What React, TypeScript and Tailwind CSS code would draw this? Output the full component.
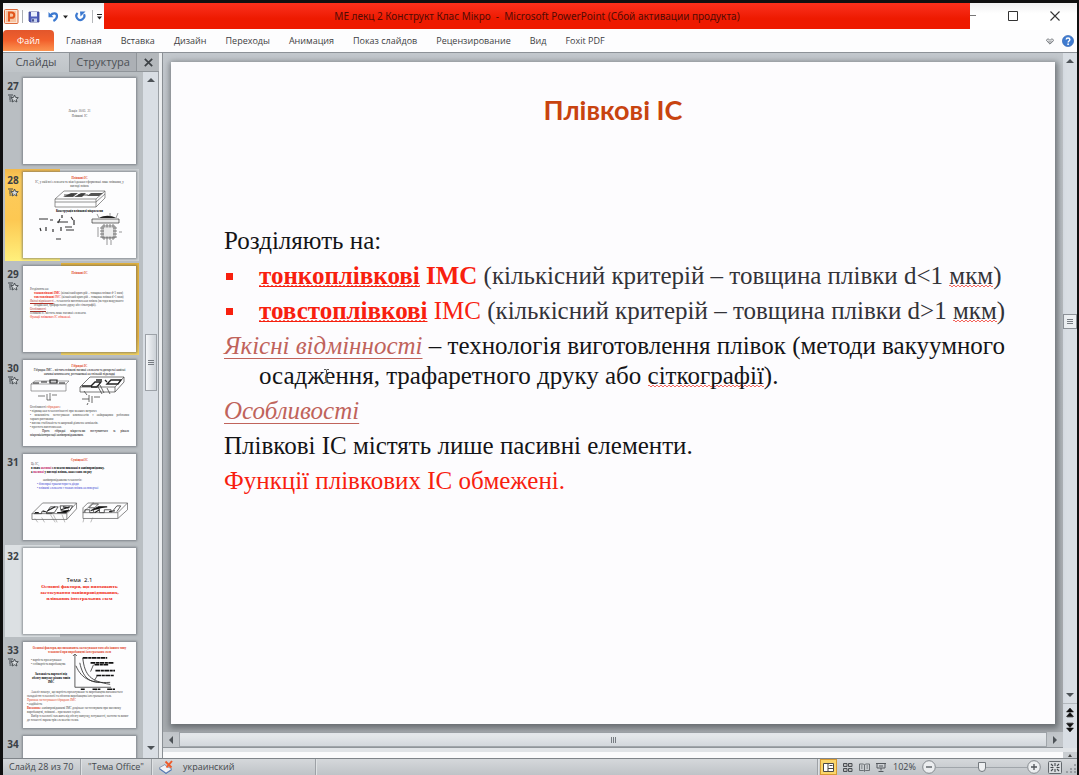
import type { ReactNode } from "react";

const ui = "font-['Open_Sans','Noto_Sans',sans-serif]";
const serif = "font-['Liberation_Serif','Times_New_Roman',serif]";

const tabs = [
  "Главная",
  "Вставка",
  "Дизайн",
  "Переходы",
  "Анимация",
  "Показ слайдов",
  "Рецензирование",
  "Вид",
  "Foxit PDF",
];

function Logo() {
  return (
    <svg width="15" height="15" viewBox="0 0 15 15" aria-hidden="true">
      <rect x="0.5" y="0.5" width="13.5" height="14" rx="1" fill="#fbe3d3" stroke="#dd6a3a" />
      <rect x="2" y="2" width="10" height="11" fill="#f7c3a0" />
      <path d="M5 12.5V3.5h2.6a2.6 2.6 0 0 1 0 5.3H5" fill="none" stroke="#e2541b" strokeWidth="2" />
    </svg>
  );
}

function SaveIcon() {
  return (
    <svg width="12" height="12" viewBox="0 0 12 12" aria-hidden="true">
      <path d="M1 1h10v10H2L1 10z" fill="#4d5bb8" stroke="#3d4490" strokeWidth="0.8" />
      <rect x="3" y="1" width="6" height="4.5" fill="#e9eefb" />
      <rect x="3.5" y="7.5" width="5.5" height="3.5" fill="#c4d0ee" />
      <rect x="4.2" y="8.2" width="1.6" height="2.4" fill="#2c3478" />
    </svg>
  );
}

function UndoIcon() {
  return (
    <svg width="11" height="11" viewBox="0 0 11 11" aria-hidden="true">
      <path d="M0.5 1v5.2h5z" fill="#3c79d0" />
      <path d="M2.5 4.4C4.5 1.6 9 1.6 9 5c0 2.2-1.400 3.800-3.600 5" fill="none" stroke="#3c79d0" strokeWidth="2.200" />
    </svg>
  );
}

function RedoIcon() {
  return (
    <svg width="11" height="11" viewBox="0 0 11 11" aria-hidden="true">
      <path d="M2.600 2A4 4 0 1 0 9 3.200" fill="none" stroke="#3c79d0" strokeWidth="2.200" />
      <path d="M5 0.500h5.500L5.500 5.500z" fill="#3c79d0" />
    </svg>
  );
}

function Arrow({ dir, className = "" }: { dir: "up" | "down" | "left" | "right"; className?: string }) {
  const paths = {
    up: "M0 6 4 2l4 4z",
    down: "M0 2h8L4 6z",
    left: "M6 0v8L2 4z",
    right: "M2 0l4 4-4 4z",
  };
  return (
    <svg width="8" height="8" viewBox="0 0 8 8" className={`shrink-0 ${className}`} aria-hidden="true">
      <path d={paths[dir]} fill="#4d5257" />
    </svg>
  );
}

function StarIcon() {
  return (
    <svg width="11" height="9" viewBox="0 0 11 9" aria-hidden="true">
      <path d="M0 1h5M1 3h3M1 5h2.500M1.500 7h2" stroke="#42474c" strokeWidth="1.100" />
      <path
        d="M6.500 1 7.600 3.400 10.300 3.700 8.300 5.400 8.900 8 6.500 6.700 4.200 8 4.800 5.400 2.900 3.700 5.500 3.400z"
        fill="#d5d9dc"
        stroke="#42474c"
        strokeWidth="0.9"
      />
    </svg>
  );
}

function QuickAccess() {
  return (
    <div className="flex w-[101px] shrink-0 items-center pl-px">
      <Logo />
      <span className="ml-[3px] h-[13px] w-px bg-[#aaaeb2]" />
      <button aria-label="Сохранить" className="ml-[5px]"><SaveIcon /></button>
      <button aria-label="Отменить" className="ml-2"><UndoIcon /></button>
      <button aria-label="Список отмены" className="ml-1">
        <svg width="5" height="4" viewBox="0 0 5 4"><path d="M0 0.500h5L2.500 3.500z" fill="#222" /></svg>
      </button>
      <button aria-label="Повторить" className="ml-[7px]"><RedoIcon /></button>
      <span className="ml-1.5 h-[13px] w-px bg-[#b5b8bb]" />
      <button aria-label="Настройка панели" className="ml-1">
        <svg width="5" height="6" viewBox="0 0 5 6"><path d="M0 0.500h5" stroke="#222" /><path d="M0 2.500h5L2.500 5.500z" fill="#222" /></svg>
      </button>
    </div>
  );
}

function TitleBar() {
  return (
    <header className="flex h-[27px] shrink-0 bg-gradient-to-b from-[#f1f1f2] to-white to-40%">
      <QuickAccess />
      <h1 className="flex h-[26px] min-w-0 flex-1 items-center justify-center bg-gradient-to-b from-[#fb301b] to-[#ee1a00] to-60% font-['Noto_Sans',sans-serif] text-[10px] whitespace-nowrap text-[#520b04]">
        МЕ лекц 2 Конструкт Клас Мікро&nbsp; -&nbsp; Microsoft PowerPoint (Сбой активации продукта)
      </h1>
      <div className="flex w-[107px] shrink-0 items-center pb-0.5">
        <button aria-label="Свернуть"><svg width="6" height="9" viewBox="0 0 6 9"><path d="M0 4.500h6" stroke="#777" /></svg></button>
        <button aria-label="Развернуть" className="ml-8"><svg width="10" height="10" viewBox="0 0 10 10"><path d="M0.500 0.500h9v9h-9z" fill="none" stroke="#333" /></svg></button>
        <button aria-label="Закрыть" className="ml-8"><svg width="10" height="10" viewBox="0 0 10 10"><path d="m0.500 0.500 9 9M9.500 0.500l-9 9" stroke="#333" strokeWidth="1.100" /></svg></button>
      </div>
    </header>
  );
}

function Ribbon() {
  return (
    <nav className="flex h-[23px] shrink-0 items-center border-b border-[#8d9298] bg-[#fdfdfe] text-[9px] text-[#3e3e42]">
      <button className="h-[21px] w-[51px] self-start rounded-t-sm bg-gradient-to-b from-[#e2562c] via-[#f2602c] to-[#fb9350] text-white">Файл</button>
      <div className="flex flex-1 gap-[19px] pl-3">
        {tabs.map((t) => (
          <button key={t} className="whitespace-nowrap">{t}</button>
        ))}
      </div>
      <button aria-label="Свернуть ленту" className="mr-2">
        <svg width="8" height="7" viewBox="0 0 7 6"><path d="M3.500 5.300 0.600 2.400C0.300 0.500 2.500 0.300 3.500 2 4.500 0.300 6.700 0.500 6.400 2.400zM2 2.500 3.500 3.800 5 2.500" fill="none" stroke="#65696e" strokeWidth="0.800" /></svg>
      </button>
      <button aria-label="Справка" className="mr-[3px]">
        <svg width="12" height="12" viewBox="0 0 12 12">
          <circle cx="6" cy="6" r="5.600" fill="#3f7bd0" stroke="#2d5fae" strokeWidth="0.600" />
          <path d="M4.200 4.600C4.200 2.500 7.900 2.500 7.900 4.600 7.900 6 6.100 5.900 6.100 7.400" fill="none" stroke="#fff" strokeWidth="1.400" />
          <circle cx="6.100" cy="9.200" r="0.900" fill="#fff" />
        </svg>
      </button>
    </nav>
  );
}

function Chip({ className = "" }: { className?: string }) {
  return (
    <svg viewBox="0 0 52 18" className={className} aria-hidden="true">
      <path d="M1 9h41v8H1zM1 9 10 1h41l-9 8M51 1v7l-9 9M1 12h41l9-8" fill="none" stroke="#666" strokeWidth="0.700" />
      <path d="m9 7 8-4h7l-5 4zM20 7l7-4h5l-4 4zM33 6l4-3h12l-4 3z" fill="#555" />
      <path d="M10 5h10M24 5h10" stroke="#222" strokeWidth="0.800" />
    </svg>
  );
}

function ChipB({ className = "" }: { className?: string }) {
  return (
    <svg viewBox="0 0 48 22" className={className} aria-hidden="true">
      <path d="M1 12h36v6H1zM1 12 12 1h35L37 12M47 1v6L37 18" fill="none" stroke="#555" strokeWidth="0.700" />
      <path d="M3 12h8v-2h5v2h6M20 5h8l-4 6h-8zM30 4h13l-3 5h-9z" fill="none" stroke="#444" strokeWidth="0.900" />
      <path d="m17 9 8-4M27 11h9l3-3M31 8l9-3M4 11h4M12 9l3 1M33 5l6 1" stroke="#222" strokeWidth="1.200" />
      <path d="m4 17 3 4M11 16l3 5M20 13l5 8M23 13l4 8M32 13l3 8" stroke="#777" strokeWidth="0.500" />
    </svg>
  );
}

function ChipC({ className = "" }: { className?: string }) {
  return (
    <svg viewBox="0 0 48 22" className={className} aria-hidden="true">
      <path d="M1 11h36v6H1zM1 11 11 1h36L37 11M47 1v7L37 17M1 11V6l5-5h6" fill="none" stroke="#555" strokeWidth="0.700" />
      <path d="M3 11V8h5v3h4V7h6v4h5V8h7v3M7 6l4-4h6l-4 4zM32 9l4-5h4l-4 6" fill="none" stroke="#444" strokeWidth="0.900" />
      <path d="M9 9l8-4h9M13 11l5-3M28 10l6-1" stroke="#222" strokeWidth="1.200" />
      <path d="m2 17-1 4M11 16l-2 5" stroke="#777" strokeWidth="0.500" />
    </svg>
  );
}

function Thumb27() {
  return (
    <div className="flex flex-col items-center pt-[31px] text-[3px] leading-[5px]">
      <p>Лекція&nbsp; 10.03.&nbsp; 21</p>
      <p>Плівкові&nbsp; ІС</p>
    </div>
  );
}

function Thumb28() {
  return (
    <div className="flex flex-col items-center px-2 pt-1 text-center text-[3px] leading-[4px]">
      <p className="font-bold text-[#e0401c]">Плівкові ІС</p>
      <p>ІС, у якій всі елементи та міжз'єднання сформовані лише плівками, у вигляді плівок</p>
      <Chip className="mt-0.5 w-[52px]" />
      <p className="mt-px font-bold text-black">Конструкція плівкової мікросхеми</p>
      <svg viewBox="0 0 86 34" className="w-[86px]" aria-hidden="true">
        <path d="M2 6h9M13 7h3M20 9h11M25 2v3M34 4l2 3M23 6l-2 4M3 15l1 3M9 14v4M16 16v3M24 14v4M28 14h7M29 17h8M37 7v5M19 26h5" stroke="#333" strokeWidth="1.200" />
        <path d="M55 6h27v4H55z" fill="#eee" stroke="#333" strokeWidth="0.700" />
        <path d="M62 5c5-3 12-3 17 0z" fill="#222" />
        <path d="M65 13h13v12H65zM67 11v16M70 11v16M73 11v16M76 11v16M63 15h17M63 18h17M63 21h17M63 24h17" fill="none" stroke="#666" strokeWidth="0.800" />
        <path d="M67 14.500h9v9h-9z" fill="#eee" />
        <path d="m60 1 2 4M73 0v4M81 0l-2 5M61 14v10M82 19h3M70 27v5M74 27v5" stroke="#555" strokeWidth="0.600" />
      </svg>
    </div>
  );
}

function Thumb29() {
  return (
    <div className="px-[7px] pt-[5px] text-[3px] leading-[4px]">
      <p className="mb-3 text-center font-bold text-[#e0401c]">Плівкові ІС</p>
      <p>Розділяють на:</p>
      <p className="pl-1 whitespace-nowrap"><b className="text-[#f01b0c]">тонкоплівкові ІМС</b> (кількісний критерій – товщина плівки d&lt;1 мкм)</p>
      <p className="pl-1 whitespace-nowrap"><b className="text-[#f01b0c]">товстоплівкові</b> <span className="text-[#f01b0c]">ІМС</span> (кількісний критерій – товщина плівки d&gt;1 мкм)</p>
      <p className="pl-1 -indent-1"><u className="text-[#b03028]">Якісні відмінності</u> – технологія виготовлення плівок (методи вакуумного осадження, трафаретного друку або сіткографії).</p>
      <p className="text-[#b03028] underline">Особливості</p>
      <p>Плівкові ІС містять лише пасивні елементи.</p>
      <p className="text-[#f01b0c]">Функції плівкових ІС обмежені.</p>
    </div>
  );
}

function Thumb30() {
  return (
    <div className="px-[7px] pt-1 text-[3px] leading-[4px]">
      <p className="text-center font-bold text-[#e0401c]">Гібридні ІС</p>
      <p className="text-center text-black">Гібридна ІМС – містить плівкові пасивні елементи та дискретні навісні активні компоненти, розташовані на спільній підкладці</p>
      <div className="flex items-start justify-between pr-1">
        <svg viewBox="0 0 40 26" className="w-[40px]" aria-hidden="true">
          <path d="M1 8h35v7H1zM1 8l4-3h34l-3 3" fill="none" stroke="#666" strokeWidth="0.600" />
          <path d="M3 7h6M11 6h6M20 4h7v3h-7zM29 7h6" fill="none" stroke="#222" strokeWidth="1.200" />
          <path d="M8 20h7M17 18v6M20 17v7M22 19h5M17 24h4" stroke="#444" strokeWidth="0.700" />
        </svg>
        <svg viewBox="0 0 46 29" className="w-[46px]" aria-hidden="true">
          <path d="M1 11h35v5H1zM1 11 11 1h34L36 11M45 1v5l-9 10" fill="none" stroke="#444" strokeWidth="0.700" />
          <path d="M3 10h9l4-4h6l-4 5h-6M17 4h6M28 8l4-4h10l-3 4zM26 4l2 2" fill="none" stroke="#222" strokeWidth="1.300" />
          <path d="M18 9l5 9M21 9l4 8M28 12l3 6M5 15l3 4M3 23h7M10 19v7M13 20v7M15 21h6M9 27l-1 2" stroke="#444" strokeWidth="0.800" />
        </svg>
      </div>
      <p>Особливості <span className="text-[#e0401c]">гібридних</span>:</p>
      <p>• підвищення технологічності при менших витратах</p>
      <p className="text-justify">• можливість застосування компонентів з найкращими робочими характеристиками</p>
      <p>• висока стабільність та широкий діапазон номіналів.</p>
      <p>• простота виготовлення.</p>
      <p className="text-justify indent-3 text-black">Проте гібридні мікросхеми поступаються за рівнем мікромініатюризації напівпровідниковим.</p>
    </div>
  );
}

function Thumb31() {
  return (
    <div className="px-2 pt-1 text-[3px] leading-[4px]">
      <p className="text-center font-bold text-[#e0401c]">Суміщені ІС</p>
      <p>Це ІС,</p>
      <p className="font-bold text-black">в яких <span className="text-[#c02068]">активні</span> елементи виконані в напівпровіднику,</p>
      <p className="font-bold text-black">а <span className="text-[#c02068]">пасивні</span> у вигляді плівок, нанесених зверху</p>
      <p className="mt-1 pl-3">напівпровідникова технологія:</p>
      <p className="pl-1.5 text-[#3540d0]">• біполярні транзистори та діоди</p>
      <p className="pl-1.5 text-[#3540d0]">• плівкові елементи з тонких плівок на поверхні</p>
      <div className="mt-3 flex gap-1">
        <ChipB className="w-[48px]" />
        <ChipC className="w-[48px]" />
      </div>
    </div>
  );
}

function Thumb32() {
  return (
    <div className="flex flex-col items-center pt-[29px] text-center">
      <p className="font-['Open_Sans',sans-serif] text-[6px] leading-[7px] text-black">Тема&nbsp; 2.1</p>
      <p className="w-[90px] text-[5px] leading-[6px] font-bold text-[#f01b0c]">Основні фактори, що визначають застосування напівпровідникових, плівкових інтегральних схем</p>
    </div>
  );
}

function Thumb33() {
  return (
    <div className="px-1 pt-1 text-[3px] leading-[4px]">
      <p className="text-center font-bold text-[#e0401c]">Основні фактори, що визначають застосування того або іншого типу технології при виробництві інтегральних схем</p>
      <div className="flex justify-between pr-4 pl-1">
        <div className="pt-1">
          <p>• вартість проектування</p>
          <p>• собівартість виробництва</p>
          <p className="mt-1.5 w-[40px] text-center font-bold text-black">Залежність вартості від обсягу випуску різних типів ІМС</p>
        </div>
        <svg viewBox="0 0 46 37" className="w-[46px]" aria-hidden="true">
          <path d="M4 1v33h37M2 2l2-2 2 2" fill="none" stroke="#333" strokeWidth="0.800" />
          <path d="M5 12c6 14 16 18 35 17M12 4c2 18 8 24 28 27M9 9c3 15 10 20 20 20" fill="none" stroke="#222" strokeWidth="0.800" />
          <path d="M12 4h25M20 9h24M24 11h14M25 17h20M26 22h18M10 36h4M22 36h8M37 36h8" stroke="#111" strokeWidth="1.700" strokeDasharray="5 0.600 3 0.500" />
          <path d="m20 18 3-7M24 27l3-5" stroke="#111" strokeWidth="0.700" />
        </svg>
      </div>
      <p className="indent-1">Аналіз показує, що вартість проектування та виробництва визначається складністю технології та обсягом виробництва інтегральних схем.</p>
      <p className="text-[#e0401c]">Причина застосування гібридних ІМС</p>
      <p>• надійність</p>
      <p><b className="text-[#e0401c]">Висновок:</b> напівпровідникові ІМС доцільно застосовувати при масовому виробництві, плівкові – при малих серіях.</p>
      <p className="indent-1">Вибір технології залежить від обсягу випуску, потужності, частоти та вимог до точності параметрів елементів схеми.</p>
    </div>
  );
}

type Slide = { n: number; star?: boolean; content?: ReactNode; look?: string };

const slides: Slide[] = [
  { n: 27, star: true, content: <Thumb27 /> },
  {
    n: 28,
    star: true,
    content: <Thumb28 />,
    look: "bg-[#cfd3d6] bg-[linear-gradient(#f3b94a,#fccb5c_12%,#fdc852_55%,#fff07c)] bg-[length:55px_100%] bg-left bg-no-repeat",
  },
  {
    n: 29,
    star: true,
    content: <Thumb29 />,
    look: "bg-[linear-gradient(#e3b23c,#e8b23c_80%,#f0d060)] bg-[length:78px_100%] bg-right bg-no-repeat",
  },
  { n: 30, star: true, content: <Thumb30 /> },
  { n: 31, content: <Thumb31 /> },
  { n: 32, content: <Thumb32 />, look: "bg-[linear-gradient(#dce0e3,#dce0e3)] bg-[length:55px_100%] bg-left bg-no-repeat" },
  { n: 33, star: true, content: <Thumb33 /> },
  { n: 34 },
];

function SlidePanel() {
  return (
    <aside className="flex w-[156px] shrink-0 flex-col bg-[#b9bec2]">
      <div className="flex h-[19px] shrink-0 text-[11px] text-[#4d5156]">
        <button className="w-[66px] bg-gradient-to-b from-[#c9cdd1] to-[#bfc4c8]">Слайды</button>
        <button className="flex-1 border-b border-l border-[#90959a] bg-[#acb0b5]">Структура</button>
        <button aria-label="Закрыть панель" className="flex w-[23px] items-center justify-center border-b border-l border-[#90959a] bg-[#b4b8bc]">
          <svg width="9" height="9" viewBox="0 0 9 9"><path d="m0.800 0.800 7.400 7.400M8.200 0.800 0.800 8.200" stroke="#3d4145" strokeWidth="1.700" /></svg>
        </button>
      </div>
      <div className="flex min-h-0 flex-1">
        <ol className="flex min-w-0 flex-1 flex-col gap-0.5 overflow-hidden pt-[3px] pl-0.5">
          {slides.map((s) => (
            <li key={s.n} className={`flex w-[134px] shrink-0 py-[3px] ${s.look ?? ""}`}>
              <div className="flex w-[18px] shrink-0 flex-col items-center gap-0.5 pt-0.5 pr-0.5">
                <span className="text-[10px] leading-[12px] font-bold text-[#3b4045]">{s.n}</span>
                {s.star && <StarIcon />}
              </div>
              <div className={`h-[86px] w-[113px] overflow-hidden bg-[#fdfdfe] text-[#444] shadow-[0_0_2px_1px_rgba(90,95,100,0.600)] ${serif}`}>
                {s.content}
              </div>
            </li>
          ))}
        </ol>
        <div className="flex w-4 shrink-0 flex-col items-center border-r border-[#9a9fa4] bg-[#d9dee4] py-1">
          <Arrow dir="up" />
          <div className="flex-[250]" />
          <div className="flex h-[57px] w-3 flex-col items-center justify-center gap-px border border-[#9da2a8] bg-gradient-to-r from-[#f4f6f8] to-[#ccd1d7]">
            <span className="h-px w-1.5 bg-[#777c82]" />
            <span className="h-px w-1.5 bg-[#777c82]" />
            <span className="h-px w-1.5 bg-[#777c82]" />
          </div>
          <div className="flex-[353]" />
          <Arrow dir="down" className="mb-0.5" />
        </div>
      </div>
    </aside>
  );
}

const spell =
  "bg-[repeating-conic-gradient(#f0524a_0_25%,transparent_0_50%)] bg-[length:4px_2px] bg-[position:0_calc(100%-2px)] bg-repeat-x [background-size:4px_2px] [-webkit-box-decoration-break:clone]";
const wave =
  "bg-[linear-gradient(90deg,#f4675f_50%,transparent_50%),linear-gradient(90deg,transparent_50%,#f4675f_50%)] bg-[length:4px_1px] bg-[position:0_calc(100%-3px),0_calc(100%-2px)] bg-repeat-x";
const strong = "font-bold text-[#f8200e] underline decoration-1 underline-offset-2 [text-decoration-skip-ink:none]";
const accent = "text-[#c0635b] underline decoration-1 underline-offset-4 [text-decoration-skip-ink:none]";

function Bullet({ children }: { children: ReactNode }) {
  return (
    <li className="flex">
      <span className="flex h-[30px] w-[35px] shrink-0 items-center pl-0.5"><span className="size-[7px] bg-[#f8200e]" /></span>
      <p className="text-[#333338]">{children}</p>
    </li>
  );
}

function MainSlide() {
  return (
    <article className="relative min-h-0 flex-1 bg-[#fdfcfe] pt-8 shadow-[1px_2px_6px_2px_rgba(70,75,80,0.650)]">
      <h2 className="text-center font-['Lato','Open_Sans',sans-serif] text-[27px] leading-8 font-bold text-[#c8430f]">Плівкові ІС</h2>
      <div className={`mt-[100px] flex flex-col gap-[5px] pr-9 pl-[53px] text-[25px] leading-[30px] text-[#141416] ${serif}`}>
        <p>Розділяють на:</p>
        <ul className="flex flex-col gap-[5px]">
          <Bullet>
            <span className={`${strong} ${wave}`}>тонкоплівкові</span> <b className="text-[#f8200e]">ІМС</b> (кількісний критерій – товщина плівки d&lt;1 <span className={wave}>мкм</span>)
          </Bullet>
          <Bullet>
            <span className={`${strong} ${wave}`}>товстоплівкові</span> <span className="text-[#f8200e]">ІМС</span> (кількісний критерій – товщина плівки d&gt;1 <span className={wave}>мкм</span>)
          </Bullet>
        </ul>
        <p className="pl-[35px] -indent-[35px]">
          <i className={accent}>Якісні відмінності</i> – технологія виготовлення плівок (методи вакуумного осадження, трафаретного друку або <span className={wave}>сіткографії</span>).
        </p>
        <p><i className={accent}>Особливості</i></p>
        <p>Плівкові ІС містять лише пасивні елементи.</p>
        <p className="text-[#f8200e]">Функції плівкових ІС обмежені.</p>
      </div>
      <svg width="7" height="14" viewBox="0 0 7 14" className="absolute top-[307px] left-[152px]" aria-hidden="true">
        <path d="M1 0.500h2l0.500 0.500 0.500-0.500h2M3.500 1v12M1 13.500h2l0.500-0.500 0.500 0.500h2" fill="none" stroke="#555" strokeWidth="1" />
      </svg>
    </article>
  );
}

function DoubleArrow({ down = false }: { down?: boolean }) {
  return (
    <svg width="8" height="10" viewBox="0 0 8 10" className={down ? "rotate-180" : ""} aria-hidden="true">
      <path d="M4 0 7.500 4h-7zM4 4.500 7.500 8.500h-7zM1 9h6" fill="#111" stroke="#111" strokeWidth="0.500" />
    </svg>
  );
}

function Workspace() {
  return (
    <main className="flex min-w-0 flex-1 flex-col">
      <div className="flex min-h-0 flex-1">
        <div className="flex min-w-0 flex-1 flex-col bg-gradient-to-b from-[#c3c8cd] via-[#b3b8bd] to-[#a5a9ad]">
          <div className="flex min-h-0 flex-1 flex-col px-2 pt-[9px] pb-2">
            <MainSlide />
          </div>
          <div className="flex h-4 shrink-0 items-center border-b border-[#90959a] bg-[#c3c7cb]">
            <Arrow dir="left" className="mx-1" />
            <div className="flex h-[15px] flex-1 items-center justify-center gap-px border border-[#a0a5aa] bg-gradient-to-b from-[#e9ecef] to-[#d3d7dc]">
              <span className="h-1.5 w-px bg-[#777c82]" />
              <span className="h-1.5 w-px bg-[#777c82]" />
              <span className="h-1.5 w-px bg-[#777c82]" />
            </div>
            <Arrow dir="right" className="mx-1" />
          </div>
        </div>
        <div className="flex w-3.5 shrink-0 flex-col items-center bg-[#d9dee4]">
          <Arrow dir="up" className="mt-1" />
          <div className="flex-[250]" />
          <div className="flex h-[15px] w-3.5 flex-col items-center justify-center gap-px border border-[#8d9298] bg-[#eceff2]">
            <span className="h-px w-1.5 bg-[#777c82]" />
            <span className="h-px w-1.5 bg-[#777c82]" />
            <span className="h-px w-1.5 bg-[#777c82]" />
          </div>
          <div className="flex-[363]" />
          <Arrow dir="down" />
          <div className="mt-1 flex w-full flex-col items-center gap-1 border-t border-[#b4b9be] pt-1 pb-4">
            <DoubleArrow />
            <DoubleArrow down />
          </div>
        </div>
      </div>
      <div className="flex h-2.5 shrink-0 justify-end border-t-4 border-[#e1e4e7] bg-[#fbfbfc]">
        <div className="flex w-3.5 items-center justify-center bg-[#c9cdd1]"><svg width="4" height="3" viewBox="0 0 4 3"><path d="M0 3 2 0l2 3z" fill="#444" /></svg></div>
      </div>
    </main>
  );
}

function Divider() {
  return <span className="h-full w-px bg-[#9da1a6] shadow-[1px_0_0_#dfe2e4]" />;
}

function StatusBar() {
  return (
    <footer className="flex h-[17px] shrink-0 items-center border-t border-[#80858a] bg-gradient-to-b from-[#d5d8db] to-[#bfc3c7] text-[9px] whitespace-nowrap text-[#44484d]">
      <span className="w-[77px] pl-1.5">Слайд 28 из 70</span>
      <Divider />
      <span className="w-[70px] text-center">"Тема Office"</span>
      <Divider />
      <button aria-label="Проверка орфографии" className="ml-1.5">
        <svg width="16" height="14" viewBox="0 0 16 14">
          <path d="m1 9 6-3 7 4-6 4z" fill="#3e6fc0" />
          <path d="m1 8 6-3.500 1 1.500 6 3-6 4z" fill="#f1f4f8" stroke="#5a6f95" strokeWidth="0.600" />
          <path d="m7.500 1.500 6 6M14 1 8.500 7.500" stroke="#ee5a2a" strokeWidth="1.900" />
        </svg>
      </button>
      <span className="ml-[9px] w-[132px]">украинский</span>
      <Divider />
      <div className="flex-1" />
      <Divider />
      <div className="ml-0.5 flex items-center gap-1.5">
        <button aria-label="Обычный" className="flex h-4 w-[17px] items-center justify-center border border-[#d79a32] bg-[#fbd66a]">
          <svg width="11" height="9" viewBox="0 0 11 9"><path d="M0.500 0.500h10v8h-10z" fill="#fff" stroke="#4c4a45" /><path d="M5 0v9M5 5.500h6M6.500 2.500h3" stroke="#4c4a45" /></svg>
        </button>
        <button aria-label="Сортировщик"><svg width="10" height="9" viewBox="0 0 10 9"><path d="M0.500 0.500h3.500v3H0.500zM5.500 0.500h3.500v3H5.500zM0.500 5.500h3.500v3H0.500zM5.500 5.500h3.500v3H5.500z" fill="#bbb" stroke="#4a4e53" strokeWidth="1" /></svg></button>
        <button aria-label="Чтение"><svg width="11" height="9" viewBox="0 0 11 9"><path d="M0.500 1h4l1 1 1-1h4v6.500h-4l-1 1-1-1h-4zM5.500 2v6M2 3h1.500M2 5h1.500M7.500 3H9M7.500 5H9" fill="none" stroke="#60656a" strokeWidth="0.900" /></svg></button>
        <button aria-label="Показ слайдов"><svg width="10" height="9" viewBox="0 0 10 9"><path d="M0 0.500h10M1 1v4h8V1M5 5v2.500M2.500 8.500h5M3 3h4" fill="none" stroke="#55595e" /></svg></button>
      </div>
      <span className="ml-[7px] w-[29px]">102%</span>
      <button aria-label="Уменьшить">
        <svg width="14" height="14" viewBox="0 0 14 14"><circle cx="7" cy="7" r="6.300" fill="#eceef0" stroke="#84898e" /><path d="M4 7h6" stroke="#50555a" strokeWidth="1.300" /></svg>
      </button>
      <input
        type="range"
        aria-label="Масштаб"
        defaultValue={50}
        className="h-3.5 w-[91px] appearance-none bg-[linear-gradient(#a0a5aa,#a0a5aa)] bg-[length:100%_1px] bg-center bg-no-repeat [&::-webkit-slider-thumb]:h-2.5 [&::-webkit-slider-thumb]:w-2 [&::-webkit-slider-thumb]:appearance-none [&::-webkit-slider-thumb]:rounded-b-md [&::-webkit-slider-thumb]:border [&::-webkit-slider-thumb]:border-[#74797e] [&::-webkit-slider-thumb]:bg-[#eef0f2]"
      />
      <button aria-label="Увеличить">
        <svg width="14" height="14" viewBox="0 0 14 14"><circle cx="7" cy="7" r="6.300" fill="#eceef0" stroke="#84898e" /><path d="M4 7h6M7 4v6" stroke="#50555a" strokeWidth="1.300" /></svg>
      </button>
      <button aria-label="Вписать в окно" className="ml-[7px]">
        <svg width="14" height="13" viewBox="0 0 14 13"><rect x="0.500" y="0.500" width="13" height="12" rx="1" fill="#d9dcdf" stroke="#63686d" /><path d="M7 2v3M7 8v3M2.500 6.500h3M8.500 6.500h3M3 3l2 2M11 3 9 5M3 10l2-2M11 10 9 8" stroke="#44494e" strokeWidth="1.100" /></svg>
      </button>
      <svg width="15" height="12" viewBox="0 0 15 12" aria-hidden="true"><path d="M12 4h2M12 8h2M8 8h2M12 11h2M8 11h2M4 11h2" stroke="#8a8f94" strokeWidth="1.500" /></svg>
    </footer>
  );
}

export default function App() {
  return (
    <div className={`flex h-screen flex-col overflow-hidden bg-[#101010] pt-[3px] pr-0.5 pl-[3px] ${ui}`}>
      <TitleBar />
      <Ribbon />
      <div className="flex min-h-0 flex-1">
        <SlidePanel />
        <div className="w-1 shrink-0 border-r border-[#8a8f94] bg-[#eceef0]" />
        <Workspace />
      </div>
      <StatusBar />
    </div>
  );
}
